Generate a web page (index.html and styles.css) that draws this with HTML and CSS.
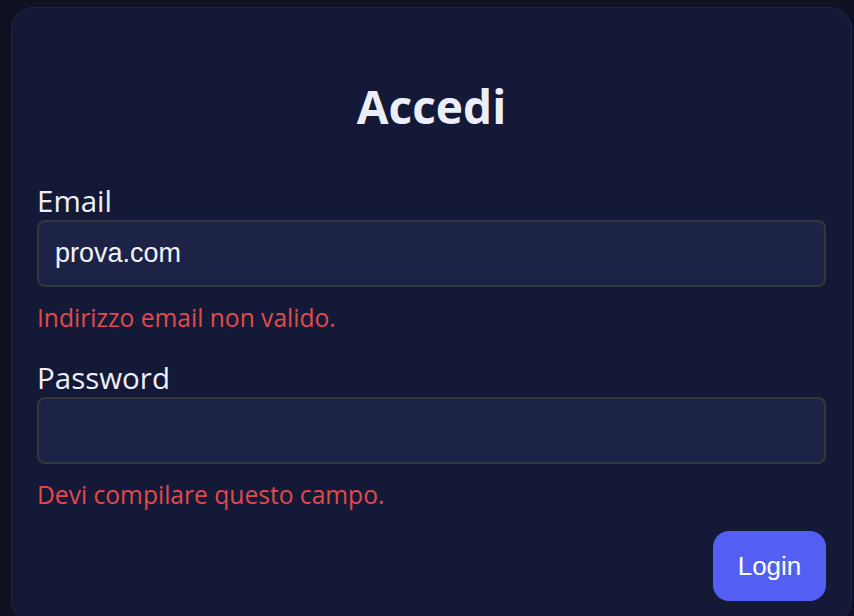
FILE: index.html
```html
<!DOCTYPE html>
<html lang="it">
<head>
<meta charset="utf-8">
<title>Accedi</title>
<link rel="stylesheet" href="styles.css">
</head>
<body>
  <main class="card">
    <h1 class="title">Accedi</h1>
    <form class="form" novalidate>
      <div class="field">
        <label class="label" for="email">Email</label>
        <input class="input" id="email" type="email" value="prova.com">
        <p class="error">Indirizzo email non valido.</p>
      </div>
      <div class="field">
        <label class="label" for="password">Password</label>
        <input class="input" id="password" type="password" value="">
        <p class="error">Devi compilare questo campo.</p>
      </div>
      <div class="actions">
        <button class="btn" type="button">Login</button>
      </div>
    </form>
  </main>
</body>
</html>
```
FILE: styles.css
```css
html, body {
  margin: 0;
  height: 100%;
}
body {
  background: #0e1120;
  padding: 7px 2px 0 11px;
  box-sizing: border-box;
  font-family: "Open Sans", "Noto Sans", sans-serif;
  overflow: hidden;
}
.card {
  box-sizing: border-box;
  background: #131936;
  border: 1px solid #1f2648;
  border-radius: 22px;
  padding: 71px 25px 12px 25px;
  height: 616px;
}
.title {
  margin: 0 0 48.5px;
  text-align: center;
  font-size: 46px;
  line-height: 1.2;
  font-weight: 700;
  color: #eceefe;
}
.form {
  display: flex;
  flex-direction: column;
}
.field {
  display: flex;
  flex-direction: column;
  margin-bottom: 27.5px;
}
.label {
  font-size: 29.5px;
  line-height: 1.2;
  color: #eef0fb;
  margin-bottom: 2px;
}
.input {
  box-sizing: border-box;
  height: 66.5px;
  width: 100%;
  background: #1d2346;
  border: 2px solid #36373d;
  border-radius: 8px;
  padding: 0 16px;
  font-family: "Liberation Sans", Arial, sans-serif;
  font-size: 27px;
  color: #f3f4fb;
  outline: none;
}
.error {
  margin: 16.5px 0 0;
  font-size: 24.6px;
  line-height: 1.2;
  color: #e14a4e;
}
.actions {
  display: flex;
  justify-content: flex-end;
  margin-top: -6px;
}
.btn {
  width: 113px;
  height: 70px;
  background: #535ff2;
  border: none;
  border-radius: 16px;
  color: #ffffff;
  font-family: "Liberation Sans", Arial, sans-serif;
  font-size: 26px;
}
```
